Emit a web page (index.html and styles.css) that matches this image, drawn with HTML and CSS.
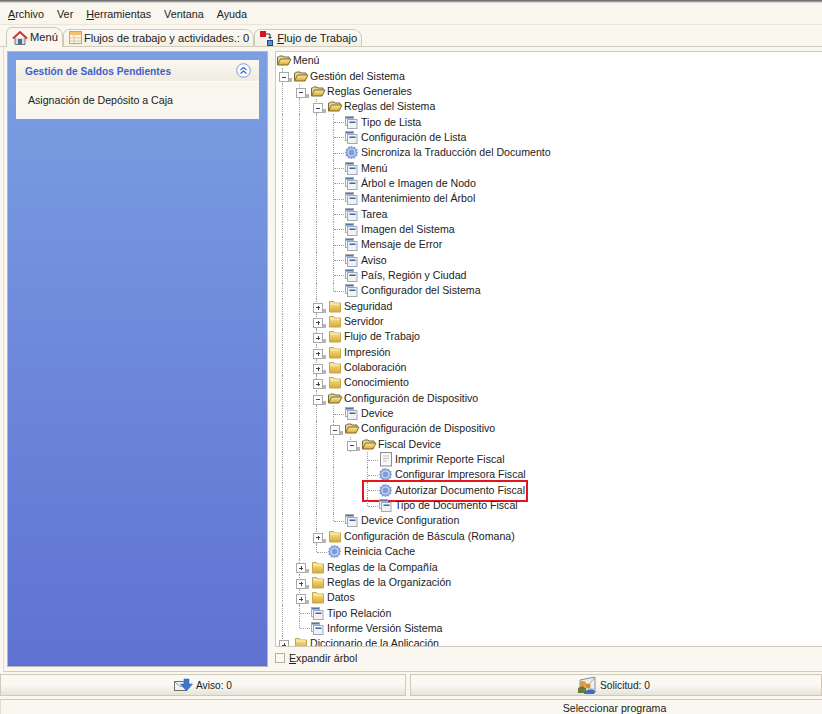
FILE: index.html
```html
<!DOCTYPE html>
<html lang="es">
<head>
<meta charset="utf-8">
<title>Menú</title>
<link rel="stylesheet" href="styles.css">
</head>
<body>
<svg class="defs" width="0" height="0" aria-hidden="true">
  <defs>
    <linearGradient id="fold" x1="0" y1="0" x2="0" y2="1"><stop offset="0" stop-color="#fbeb9c"/><stop offset="1" stop-color="#d8a82e"/></linearGradient>
    <symbol id="fo" viewBox="0 0 16 14">
      <path d="M1.500 11.500V3.500h1l1-1h3.500l1 1h5v2.500" fill="#e8d590" stroke="#7a6a35"/>
      <path d="M1.500 11.500l3-6h10.500l-3 6z" fill="url(#fold)" stroke="#7a6a35"/>
    </symbol>
    <symbol id="fc" viewBox="0 0 16 14">
      <path d="M2.500 2h4l1 1.500h6v9h-11z" fill="url(#fold)" stroke="#c4a850"/>
      <path d="M3.500 4.500h9" stroke="#fff6c4"/>
    </symbol>
    <symbol id="win" viewBox="0 0 16 15">
      <rect x="1.500" y="1.500" width="8" height="9" fill="#f4f5f6" stroke="#a8aab0"/>
      <rect x="2" y="2" width="7" height="1.500" fill="#4f76b0"/>
      <rect x="3.500" y="4.500" width="9.500" height="9" fill="#f0f2f4" stroke="#a4a8b0"/>
      <rect x="5.500" y="6.500" width="6" height="1.500" fill="#3a68a8"/>
    </symbol>
    <symbol id="gear" viewBox="0 0 16 15">
      <path d="M7.500 1l1.300 1.700 2-.8.300 2.200 2.200.3-.8 2L14 7.500l-1.700 1.300.8 2-2.200.3-.3 2.200-2-.8-1.100 1.500-1.300-1.500-2 .8-.3-2.200-2.200-.3.8-2L1 7.500l1.700-1.300-.8-2 2.200-.3.3-2.200 2 .8z" fill="#7f9cd8" stroke="#6d89c6" stroke-width=".5"/>
      <circle cx="7.500" cy="7.500" r="3.500" fill="none" stroke="#cfdcf4" stroke-width="1.200"/>
      <circle cx="7.500" cy="7.500" r="1.500" fill="#7f9ad8"/>
    </symbol>
    <symbol id="rep" viewBox="0 0 16 15">
      <rect x="2.500" y=".5" width="11" height="13.500" fill="#f8f8f6" stroke="#8d8d8d"/>
      <path d="M5 4h6M5 6.500h6M5 9h4" stroke="#c4c4c4"/>
    </symbol>
  </defs>
</svg>
<div class="app">
  <div class="topline"></div>
  <nav class="menubar">
    <span class="mi"><u>A</u>rchivo</span>
    <span class="mi">Ver</span>
    <span class="mi"><u>H</u>erramientas</span>
    <span class="mi">Ventana</span>
    <span class="mi">Ayuda</span>
  </nav>
  <div class="tabs">
    <div class="tab active">
      <svg class="ti" width="16" height="16" viewBox="0 0 16 16"><path d="M3 8v6.500h10V8" fill="#d9dde2" stroke="#777"/><rect x="6" y="9" width="4" height="5.500" fill="#4f6f95"/><path d="M1 8.500L8 2l7 6.500" fill="none" stroke="#c8352b" stroke-width="2"/></svg>
      <span>Menú</span>
    </div>
    <div class="tab">
      <svg class="ti" width="13" height="14" viewBox="0 0 13 14"><rect x=".5" y=".5" width="12" height="12" fill="#fbf6e8" stroke="#aaaaa0"/><rect x="1" y="1" width="11" height="3" fill="#f5c070"/><path d="M1 7h11M1 10h11M5 4v8" stroke="#e2c49c"/></svg>
      <span>Flujos de trabajo y actividades.: 0</span>
    </div>
    <div class="tab">
      <svg class="ti" width="15" height="16" viewBox="0 0 15 16"><rect x="0" y="1" width="6" height="6" fill="#d8141c"/><path d="M6 4h4v4" fill="none" stroke="#333"/><path d="M8 7h4l-2 2z" fill="#333"/><rect x="7.500" y="10.500" width="5" height="5" fill="#5a8fd0" stroke="#1f4a8a"/></svg>
      <span><u>F</u>lujo de Trabajo</span>
    </div>
  </div>
  <main class="content">
    <section class="leftpanel">
      <div class="card">
        <header class="cardhead">
          <span class="cardtitle">Gestión de Saldos Pendientes</span>
          <svg class="collapse" width="15" height="15" viewBox="0 0 15 15"><circle cx="7.500" cy="7.500" r="6.800" fill="#fbfbf8" stroke="#7f9bd8"/><path d="M4.500 7l3-2.500 3 2.500M4.500 10.500l3-2.500 3 2.500" fill="none" stroke="#3c62c8" stroke-width="1.100"/></svg>
        </header>
        <div class="cardbody">Asignación de Depósito a Caja</div>
      </div>
    </section>
    <section class="rightpanel">
      <div class="tree">
        <div class="r"><svg class="ic"><use href="#fo"/></svg><span class="tx">Menú</span></div>
        <div class="r"><i class="c m"></i><svg class="ic"><use href="#fo"/></svg><span class="tx">Gestión del Sistema</span></div>
        <div class="r"><i class="c v"></i><i class="c m"></i><svg class="ic"><use href="#fo"/></svg><span class="tx">Reglas Generales</span></div>
        <div class="r"><i class="c v"></i><i class="c v"></i><i class="c m"></i><svg class="ic"><use href="#fo"/></svg><span class="tx">Reglas del Sistema</span></div>
        <div class="r"><i class="c v"></i><i class="c v"></i><i class="c v"></i><i class="c t"></i><svg class="ic"><use href="#win"/></svg><span class="tx">Tipo de Lista</span></div>
        <div class="r"><i class="c v"></i><i class="c v"></i><i class="c v"></i><i class="c t"></i><svg class="ic"><use href="#win"/></svg><span class="tx">Configuración de Lista</span></div>
        <div class="r"><i class="c v"></i><i class="c v"></i><i class="c v"></i><i class="c t"></i><svg class="ic"><use href="#gear"/></svg><span class="tx">Sincroniza la Traducción del Documento</span></div>
        <div class="r"><i class="c v"></i><i class="c v"></i><i class="c v"></i><i class="c t"></i><svg class="ic"><use href="#win"/></svg><span class="tx">Menú</span></div>
        <div class="r"><i class="c v"></i><i class="c v"></i><i class="c v"></i><i class="c t"></i><svg class="ic"><use href="#win"/></svg><span class="tx">Árbol e Imagen de Nodo</span></div>
        <div class="r"><i class="c v"></i><i class="c v"></i><i class="c v"></i><i class="c t"></i><svg class="ic"><use href="#win"/></svg><span class="tx">Mantenimiento del Árbol</span></div>
        <div class="r"><i class="c v"></i><i class="c v"></i><i class="c v"></i><i class="c t"></i><svg class="ic"><use href="#win"/></svg><span class="tx">Tarea</span></div>
        <div class="r"><i class="c v"></i><i class="c v"></i><i class="c v"></i><i class="c t"></i><svg class="ic"><use href="#win"/></svg><span class="tx">Imagen del Sistema</span></div>
        <div class="r"><i class="c v"></i><i class="c v"></i><i class="c v"></i><i class="c t"></i><svg class="ic"><use href="#win"/></svg><span class="tx">Mensaje de Error</span></div>
        <div class="r"><i class="c v"></i><i class="c v"></i><i class="c v"></i><i class="c t"></i><svg class="ic"><use href="#win"/></svg><span class="tx">Aviso</span></div>
        <div class="r"><i class="c v"></i><i class="c v"></i><i class="c v"></i><i class="c t"></i><svg class="ic"><use href="#win"/></svg><span class="tx">País, Región y Ciudad</span></div>
        <div class="r"><i class="c v"></i><i class="c v"></i><i class="c v"></i><i class="c l"></i><svg class="ic"><use href="#win"/></svg><span class="tx">Configurador del Sistema</span></div>
        <div class="r"><i class="c v"></i><i class="c v"></i><i class="c p"></i><svg class="ic"><use href="#fc"/></svg><span class="tx">Seguridad</span></div>
        <div class="r"><i class="c v"></i><i class="c v"></i><i class="c p"></i><svg class="ic"><use href="#fc"/></svg><span class="tx">Servidor</span></div>
        <div class="r"><i class="c v"></i><i class="c v"></i><i class="c p"></i><svg class="ic"><use href="#fc"/></svg><span class="tx">Flujo de Trabajo</span></div>
        <div class="r"><i class="c v"></i><i class="c v"></i><i class="c p"></i><svg class="ic"><use href="#fc"/></svg><span class="tx">Impresión</span></div>
        <div class="r"><i class="c v"></i><i class="c v"></i><i class="c p"></i><svg class="ic"><use href="#fc"/></svg><span class="tx">Colaboración</span></div>
        <div class="r"><i class="c v"></i><i class="c v"></i><i class="c p"></i><svg class="ic"><use href="#fc"/></svg><span class="tx">Conocimiento</span></div>
        <div class="r"><i class="c v"></i><i class="c v"></i><i class="c m"></i><svg class="ic"><use href="#fo"/></svg><span class="tx">Configuración de Dispositivo</span></div>
        <div class="r"><i class="c v"></i><i class="c v"></i><i class="c v"></i><i class="c t"></i><svg class="ic"><use href="#win"/></svg><span class="tx">Device</span></div>
        <div class="r"><i class="c v"></i><i class="c v"></i><i class="c v"></i><i class="c m"></i><svg class="ic"><use href="#fo"/></svg><span class="tx">Configuración de Dispositivo</span></div>
        <div class="r"><i class="c v"></i><i class="c v"></i><i class="c v"></i><i class="c v"></i><i class="c m"></i><svg class="ic"><use href="#fo"/></svg><span class="tx">Fiscal Device</span></div>
        <div class="r"><i class="c v"></i><i class="c v"></i><i class="c v"></i><i class="c v"></i><i class="c"></i><i class="c t"></i><svg class="ic"><use href="#rep"/></svg><span class="tx">Imprimir Reporte Fiscal</span></div>
        <div class="r"><i class="c v"></i><i class="c v"></i><i class="c v"></i><i class="c v"></i><i class="c"></i><i class="c t"></i><svg class="ic"><use href="#gear"/></svg><span class="tx">Configurar Impresora Fiscal</span></div>
        <div class="r"><i class="c v"></i><i class="c v"></i><i class="c v"></i><i class="c v"></i><i class="c"></i><i class="c t"></i><svg class="ic"><use href="#gear"/></svg><span class="tx">Autorizar Documento Fiscal</span><b class="mark"></b></div>
        <div class="r"><i class="c v"></i><i class="c v"></i><i class="c v"></i><i class="c v"></i><i class="c"></i><i class="c l"></i><svg class="ic"><use href="#win"/></svg><span class="tx">Tipo de Documento Fiscal</span></div>
        <div class="r"><i class="c v"></i><i class="c v"></i><i class="c v"></i><i class="c l"></i><svg class="ic"><use href="#win"/></svg><span class="tx">Device Configuration</span></div>
        <div class="r"><i class="c v"></i><i class="c v"></i><i class="c p"></i><svg class="ic"><use href="#fc"/></svg><span class="tx">Configuración de Báscula (Romana)</span></div>
        <div class="r"><i class="c v"></i><i class="c v"></i><i class="c l"></i><svg class="ic"><use href="#gear"/></svg><span class="tx">Reinicia Cache</span></div>
        <div class="r"><i class="c v"></i><i class="c p"></i><svg class="ic"><use href="#fc"/></svg><span class="tx">Reglas de la Compañía</span></div>
        <div class="r"><i class="c v"></i><i class="c p"></i><svg class="ic"><use href="#fc"/></svg><span class="tx">Reglas de la Organización</span></div>
        <div class="r"><i class="c v"></i><i class="c p"></i><svg class="ic"><use href="#fc"/></svg><span class="tx">Datos</span></div>
        <div class="r"><i class="c v"></i><i class="c t"></i><svg class="ic"><use href="#win"/></svg><span class="tx">Tipo Relación</span></div>
        <div class="r"><i class="c v"></i><i class="c l"></i><svg class="ic"><use href="#win"/></svg><span class="tx">Informe Versión Sistema</span></div>
        <div class="r"><i class="c p"></i><svg class="ic"><use href="#fc"/></svg><span class="tx">Diccionario de la Aplicación</span></div>
      </div>
      <label class="expand"><span class="check"></span><span><u>E</u>xpandir árbol</span></label>
    </section>
  </main>
  <div class="buttons">
    <div class="btn btn-left">
      <svg width="19" height="15" viewBox="0 0 19 15"><rect x=".5" y="3.500" width="12" height="9" fill="#f2f2f0" stroke="#6d6d6d"/><path d="M1 4l6 5 5-4" fill="none" stroke="#9a9a9a"/><path d="M10 1h5v5h3.500l-6 7-6-7H10z" fill="#3c78c8" stroke="#2a5aa0" stroke-width=".5"/></svg>
      <span>Aviso: 0</span>
    </div>
    <div class="btn btn-right">
      <svg width="20" height="19" viewBox="0 0 20 19"><path d="M3 4l15-3v13L3 16z" fill="#eeeeec" stroke="#8a8a8a"/><path d="M3 4l8 6 7-9" fill="none" stroke="#aaa"/><circle cx="6" cy="8" r="3" fill="#e49a35"/><path d="M1 17v-5l4-2 4 2v5z" fill="#6b7a3a"/><circle cx="11" cy="10" r="2.600" fill="#d98a30"/><path d="M7 18c1-5 8-6 12-3l-2 3z" fill="#3d6fb8"/><path d="M12 13c3-1 5 0 7 2" fill="none" stroke="#a8c4ec" stroke-width="1.300"/></svg>
      <span>Solicitud: 0</span>
    </div>
  </div>
  <footer class="status">Seleccionar programa</footer>
</div>
</body>
</html>
```
FILE: styles.css
```css
* { box-sizing: border-box; }
html, body { margin: 0; padding: 0; }
body {
  width: 822px;
  height: 714px;
  overflow: hidden;
  background: #faf7f0;
  color: #222;
  font: 10.600px/15px "Liberation Sans", Arial, sans-serif;
}
.defs { position: absolute; }
.app { display: flex; flex-direction: column; height: 714px; }
.topline { height: 3px; background: linear-gradient(#5f5f5f, #8a8a8a 40%, #f3f0e6); }
.menubar {
  height: 22px;
  display: flex;
  align-items: center;
  padding: 1px 0 0 8px;
  gap: 13px;
  background: #f9f6ee;
  border-bottom: 1px solid #ebe6d8;
  font-size: 10.800px;
}
.tabs {
  height: 22px;
  display: flex;
  align-items: flex-end;
  padding-left: 6px;
  border-bottom: 1px solid #d2ccbc;
  font-size: 11.150px;
}
.tab {
  height: 17px;
  display: flex;
  align-items: center;
  gap: 2px;
  padding: 0 4px 0 5px;
  border: 1px solid #cfc9b8;
  border-bottom: 0;
  border-radius: 6px 9px 0 0;
  background: linear-gradient(#fcfaf5, #f3f0e5);
  white-space: nowrap;
}
.tab.active {
  height: 20px;
  margin-bottom: -1px;
  background: #faf7f0;
  position: relative;
}
.ti { flex: none; }
.content {
  flex: 1;
  display: flex;
  gap: 7px;
  margin: 0 0 2px 3px;
  padding: 4px 0 4px 3px;
  border-left: 1px solid #e2dccc;
  border-bottom: 1px solid #d2ccbc;
  min-height: 0;
}
.leftpanel {
  width: 261px;
  padding: 8px;
  border: 1px solid #b9b9b4;
  background: linear-gradient(#7c9fe2, #5f72d3);
}
.card { background: #f9f6ef; }
.cardhead {
  height: 22px;
  display: flex;
  align-items: center;
  justify-content: space-between;
  padding: 0 8px 0 9px;
  background: linear-gradient(#fbf8f2, #efebde);
  border-bottom: 1px solid #fff;
}
.cardtitle { color: #3e5fcb; font-weight: bold; font-size: 10.200px; padding-top: 1px; }
.cardbody { height: 37px; padding: 11px 12px 0; }
.rightpanel {
  flex: 1;
  display: flex;
  flex-direction: column;
  min-width: 0;
}
.tree {
  flex: none;
  height: 596px;
  overflow: hidden;
  background: #fff;
  border: 1px solid #cfcabd;
  border-width: 1px 0 1px 1px;
  padding-top: 1px;
}
.r {
  height: 15.350px;
  display: flex;
  align-items: center;
  position: relative;
  white-space: nowrap;
}
.c {
  flex: none;
  width: 17px;
  height: 100%;
  position: relative;
}
.c.v::before, .c.t::before, .c.l::before, .c.m::before, .c.p::before {
  content: "";
  position: absolute;
  left: 6px;
  top: 0;
  bottom: 0;
  border-left: 1px dotted #a0a0a0;
}
.c.l::before { bottom: 50%; }
.c.t::after, .c.l::after {
  content: "";
  position: absolute;
  left: 7px;
  top: 50%;
  width: 10px;
  border-top: 1px dotted #a0a0a0;
}
.c.m::after, .c.p::after {
  content: "";
  position: absolute;
  left: 3px;
  top: 4px;
  width: 8px;
  height: 8px;
  background: linear-gradient(#444, #444) center / 4px 1px no-repeat, #fff;
  border: 1px solid #a8a8a8;
  box-shadow: 6px 3px 0 -3px #b5b5b5;
}
.c.p::after {
  background: linear-gradient(#444, #444) center / 4px 1px no-repeat, linear-gradient(#444, #444) center / 1px 4px no-repeat, #fff;
}
.ic { flex: none; width: 16px; height: 15px; margin-right: 1px; }
.mark {
  position: absolute;
  left: 86px;
  top: -3px;
  width: 166px;
  height: 22px;
  border: 2px solid #e8141c;
}
.expand {
  flex: 1;
  display: flex;
  align-items: center;
  gap: 4px;
  padding-top: 2px;
}
.check {
  width: 10px;
  height: 10px;
  border: 1px solid #b5b0a0;
  background: #fbf9f2;
}
.buttons {
  height: 22px;
  display: flex;
  gap: 4px;
  font-size: 10.200px;
}
.btn {
  flex: 1;
  display: flex;
  align-items: center;
  justify-content: center;
  gap: 3px;
  border: 1px solid #cfc9b7;
  background: linear-gradient(#fbf9f3, #faf8f2 50%, #e6e3d8);
}
.btn-left { flex: none; width: 406px; }
.btn-right { padding-right: 5px; }
.status {
  height: 15px;
  margin-top: 3px;
  border-top: 1px solid #cfc9b7;
  border-left: 1px solid #e2dccc;
  text-align: center;
  padding-left: 406px;
  line-height: 16px;
}
```
